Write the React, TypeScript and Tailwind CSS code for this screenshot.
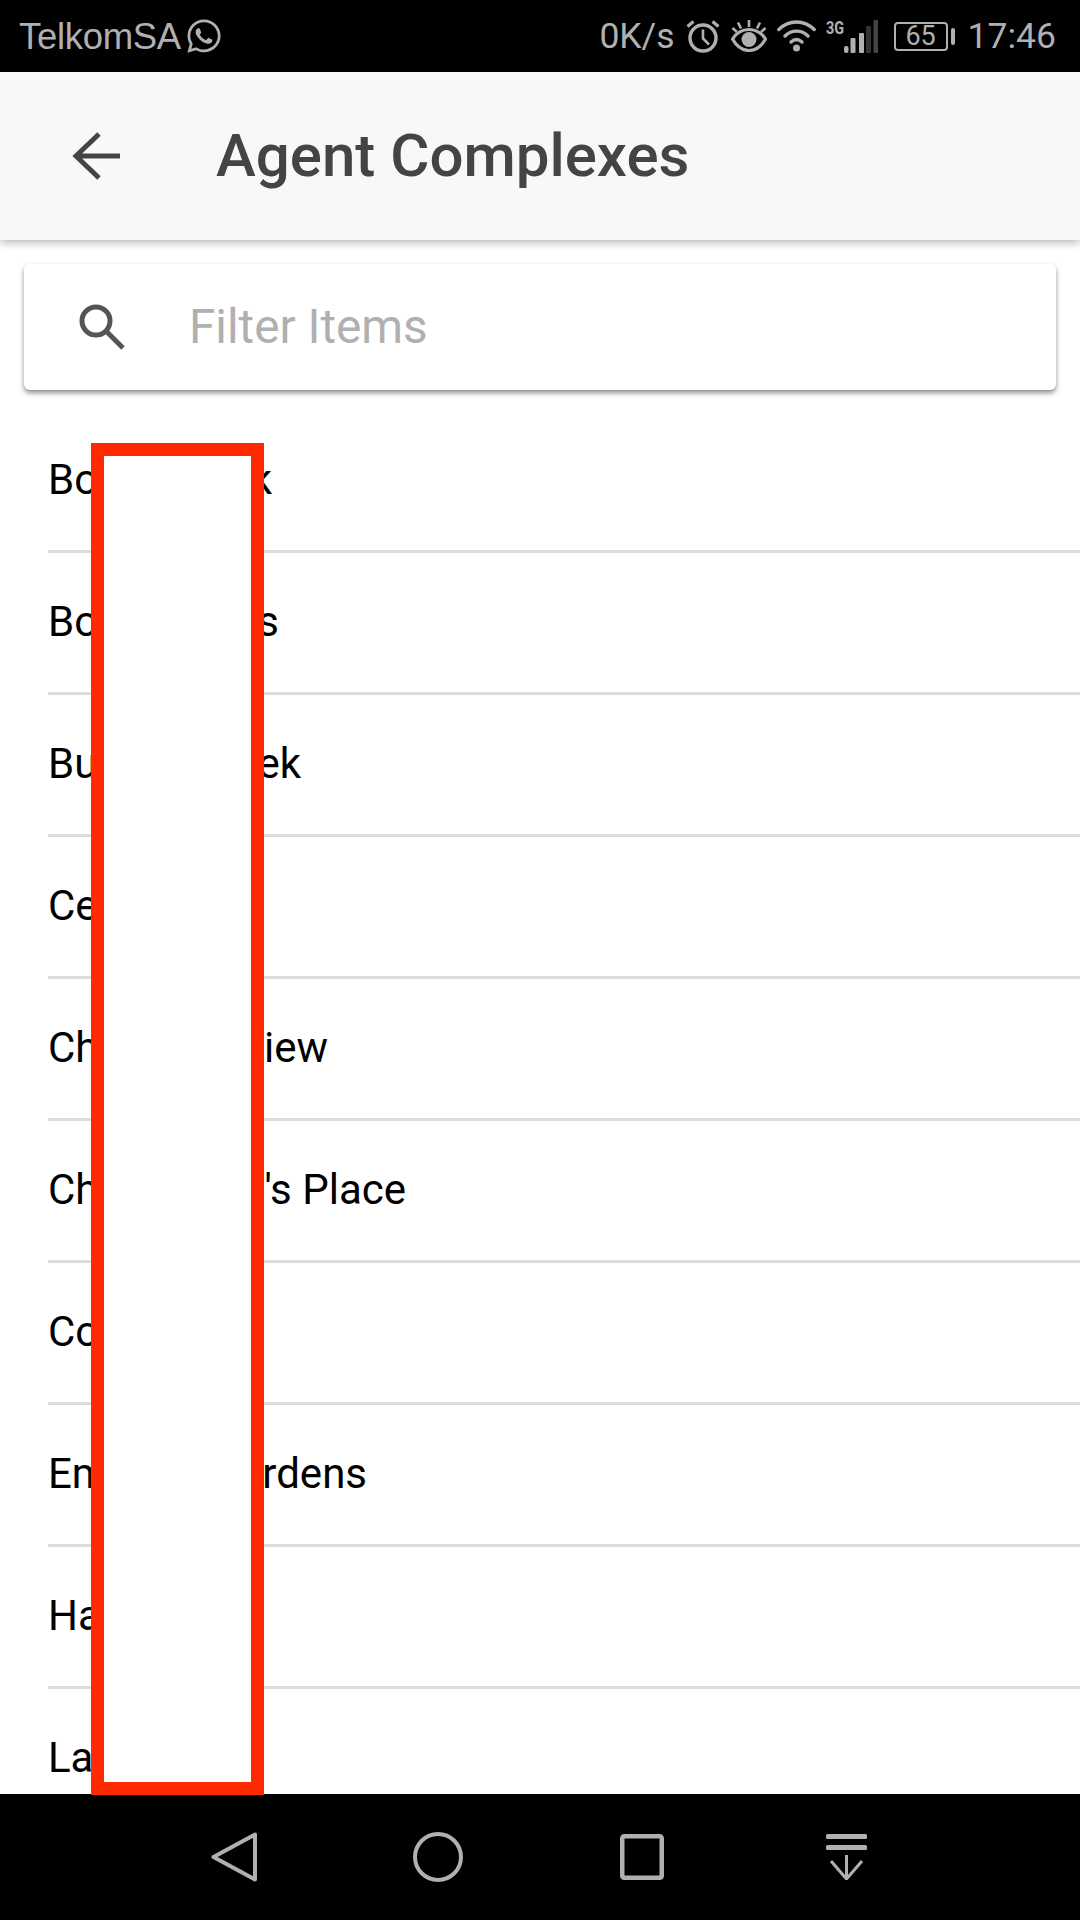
import React from "react";
import { FaWhatsapp } from "react-icons/fa";

type Row = { a: string; b?: string; w?: string };

const rows: Row[] = [
  { a: "Bo", b: "k", w: "w-[224px]" },
  { a: "Bo", b: "s", w: "w-[231px]" },
  { a: "Bu", b: "ek", w: "w-[253px]" },
  { a: "Ce" },
  { a: "Ch", b: "iew", w: "w-[280px]" },
  { a: "Ch", b: "'s Place", w: "w-[358px]" },
  { a: "Co" },
  { a: "Em", b: "rdens", w: "w-[319px]" },
  { a: "Ha" },
  { a: "La" },
];

const Alarm = () => (
  <svg width="34" height="34" viewBox="0 0 34 34" fill="none" stroke="#b0b0b0" strokeWidth="3.4">
    <circle cx="17" cy="19" r="13" />
    <path d="M17 10.500V19.500L23 25.500" strokeWidth="2.600" />
    <path d="M1.500 7.500L7.500 2.500M32.500 7.500L26.500 2.500" strokeWidth="3.200" />
  </svg>
);

const Eye = () => (
  <svg width="36" height="32" viewBox="0 0 36 32" fill="none" stroke="#b0b0b0" strokeWidth="3.200">
    <path d="M1.500 19C6 12 12 9.500 18 9.500S30 12 34.500 19C30 27 24 30.500 18 30.500S6 27 1.500 19Z" />
    <circle cx="18" cy="19.500" r="7.500" fill="#b0b0b0" stroke="none" />
    <path d="M18 0V7M7 2.500L10 8.500M29 2.500L26 8.500M1.500 8L6 12M34.500 8L30 12" strokeWidth="2.600" />
  </svg>
);

const Wifi = () => (
  <svg width="39" height="32" viewBox="0 0 39 32" fill="none" stroke="#b0b0b0" strokeWidth="3.400" strokeLinecap="round">
    <path d="M1.800 9.500C12 -0.500 27 -0.500 37.200 9.500" />
    <path d="M8 16C14.500 9.500 24.500 9.500 31 16" />
    <path d="M14 22C17.500 18.800 21.500 18.800 25 22" />
    <circle cx="19.500" cy="28" r="3.500" fill="#b0b0b0" stroke="none" />
  </svg>
);

const Signal = () => (
  <div className="flex h-[33px] w-[52px] items-start">
    <span className="inline-block w-[18px] origin-top-left scale-x-[0.8] text-[18px] font-bold leading-[15px] text-[#b0b0b0]">3G</span>
    <svg width="34" height="33" viewBox="18 0 34 33">
      <rect x="18" y="26" width="4.500" height="7" rx="2" fill="#b0b0b0" />
      <rect x="24.500" y="18" width="5" height="15" rx="1" fill="#b0b0b0" />
      <rect x="33" y="13" width="5" height="20" rx="1" fill="#b0b0b0" />
      <rect x="40" y="6" width="5" height="27" rx="1" fill="#333333" />
      <rect x="47.500" y="0" width="4.500" height="33" rx="1" fill="#444444" />
    </svg>
  </div>
);

const NavBack = () => (
  <svg width="46" height="50" viewBox="0 0 46 50" fill="none" stroke="#b0b0b0" strokeWidth="4" strokeLinejoin="round">
    <path d="M44 2.500V47.500L2.500 25Z" />
  </svg>
);

const NavHome = () => (
  <svg width="50" height="50" viewBox="0 0 50 50" fill="none" stroke="#b0b0b0" strokeWidth="4">
    <circle cx="25" cy="25" r="23" />
  </svg>
);

const NavRecent = () => (
  <svg width="44" height="46" viewBox="0 0 44 46" fill="none" stroke="#b0b0b0" strokeWidth="4.500">
    <rect x="2.250" y="2.250" width="39.500" height="41.500" rx="2" />
  </svg>
);

const NavDown = () => (
  <svg width="41" height="46" viewBox="0 0 41 46" fill="none" stroke="#b0b0b0">
    <rect x="0" y="0" width="41" height="5" rx="1.500" fill="#b0b0b0" stroke="none" />
    <rect x="0" y="11" width="41" height="5" rx="1.500" fill="#b0b0b0" stroke="none" />
    <path d="M20.500 21V45M5 27L20.500 45L36 27" strokeWidth="3" />
  </svg>
);

export default function App() {
  return (
    <div className="relative w-[1080px] h-[1920px] overflow-hidden bg-white flex flex-col font-['Roboto',sans-serif]">
      <div className="h-[72px] shrink-0 bg-black flex items-center justify-between pl-[19px] pr-[24px] text-[#b0b0b0]">
        <div className="flex items-center gap-[4px]">
          <span className="mt-[2px] text-[36.500px] font-['Liberation_Sans',sans-serif] tracking-[-0.3px] leading-none">TelkomSA</span>
          <FaWhatsapp className="w-[38px] h-[38px]" />
        </div>
        <div className="flex items-center">
          <span className="mt-[2px] text-[35.500px] leading-none mr-[11px]">0K/s</span>
          <span className="mr-[11px]"><Alarm /></span>
          <span className="mr-[10px]"><Eye /></span>
          <span className="mr-[10px]"><Wifi /></span>
          <span className="mr-[16px]"><Signal /></span>
          <div className="flex items-center mr-[13px]">
            <div className="w-[54px] h-[29px] border-2 border-[#b0b0b0] rounded-[4px] flex items-center justify-center text-[27px] leading-none">65</div>
            <div className="ml-[3px] w-[4px] h-[17px] bg-[#b0b0b0] rounded-[2px]" />
          </div>
          <span className="mt-[2px] text-[35.500px] leading-none">17:46</span>
        </div>
      </div>

      <header className="h-[168px] shrink-0 bg-[#f8f8f8] flex items-center shadow-[0_2px_9px_rgba(0,0,0,0.32)] relative z-10">
        <svg className="ml-[72px]" width="48" height="48" viewBox="0 0 48 48" fill="none" stroke="#444444" strokeWidth="5">
          <path d="M48 24H4M27 2L4 24L27 46" />
        </svg>
        <h1 className="ml-[96px] text-[60px] font-medium leading-none text-[#444444]">Agent Complexes</h1>
      </header>

      <main className="flex-1 min-h-0 overflow-hidden">
        <div className="mt-[24px] mx-[24px] h-[126px] bg-white rounded-[6px] flex items-center shadow-[0_3px_5px_rgba(0,0,0,0.45)]">
          <svg className="ml-[55px]" width="46" height="46" viewBox="0 0 46 46" fill="none" stroke="#555555" strokeWidth="5">
            <circle cx="17" cy="17" r="14" />
            <path d="M27 27L44 44" />
          </svg>
          <span className="ml-[64px] mt-[2px] text-[47.700px] leading-none text-[#b0b0b0]">Filter Items</span>
        </div>
        <ul className="mt-[21px] pl-[48px]">
          {rows.map((r, i) => (
            <li key={i} className="h-[142px] border-b-[3px] border-[#dcdcdc] flex items-center pb-[2px] text-[42px] leading-none text-black">
              {r.b ? (
                <div className={`flex justify-between ${r.w}`}>
                  <span>{r.a}</span>
                  <span>{r.b}</span>
                </div>
              ) : (
                <span>{r.a}</span>
              )}
            </li>
          ))}
        </ul>
      </main>

      <nav className="h-[126px] shrink-0 bg-black flex items-center justify-center">
        <div className="w-[204px] flex justify-center"><NavBack /></div>
        <div className="w-[204px] flex justify-center"><NavHome /></div>
        <div className="w-[204px] flex justify-center"><NavRecent /></div>
        <div className="w-[204px] flex justify-center"><NavDown /></div>
      </nav>

      <div className="absolute left-[91px] top-[443px] w-[173px] h-[1352px] bg-white border-[13px] border-[#ff2a00] z-20" />
    </div>
  );
}
